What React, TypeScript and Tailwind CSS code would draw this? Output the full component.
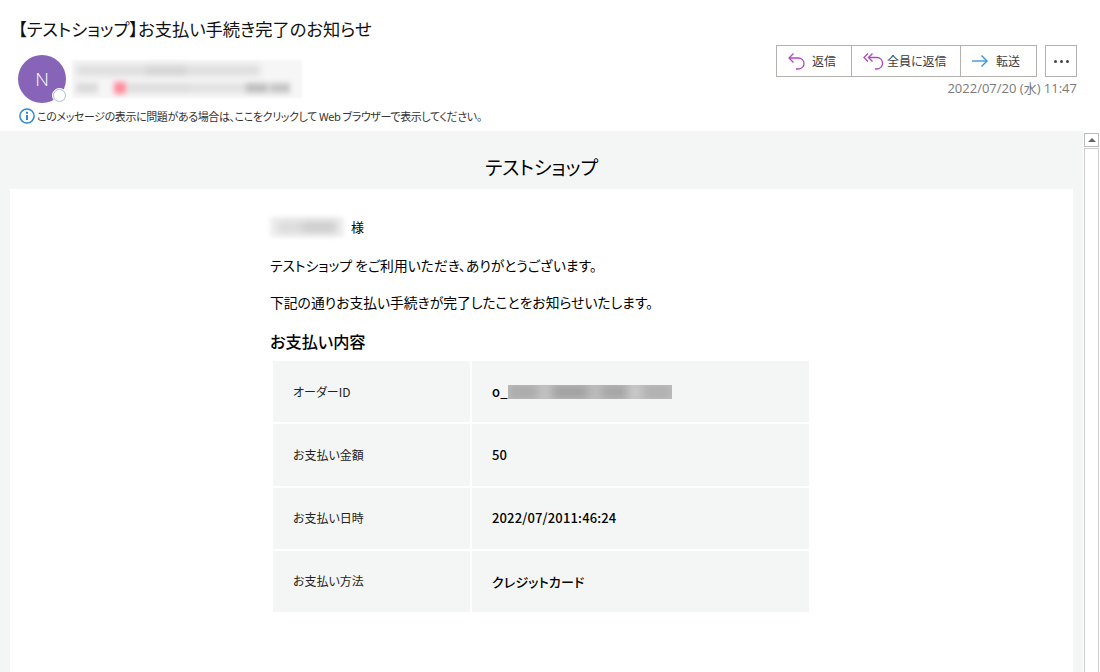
import React from 'react';

const rows = [
  { label: 'オーダーID', value: 'o_', blurred: true },
  { label: 'お支払い金額', value: '50' },
  { label: 'お支払い日時', value: '2022/07/20 11:46:24' },
  { label: 'お支払い方法', value: 'クレジットカード' },
];

const ReplyIcon = () => (
  <svg width="17" height="17" viewBox="0 0 17 17" fill="none" stroke="#b146c2" strokeWidth="1.3">
    <path d="M5.500 .5 1 5l4.500 4.500" />
    <path d="M1 5h9.500a5.500 5.500 0 0 1 5.500 5.500v0a5.500 5.500 0 0 1-5.500 5.500H8" />
  </svg>
);

const ReplyAllIcon = () => (
  <svg width="21" height="17" viewBox="0 0 21 17" fill="none" stroke="#b146c2" strokeWidth="1.3">
    <path d="M5 .5 1 4.500 5 8.500" />
    <path d="M9.500 .5 5.500 4.500l4 4" />
    <path d="M5.500 4.500h8.500a5.500 5.500 0 0 1 5.500 5.500v.500a5.500 5.500 0 0 1-5.500 5.500h-2" />
  </svg>
);

const ForwardIcon = () => (
  <svg width="16" height="14" viewBox="0 0 16 14" fill="none" stroke="#2b92d8" strokeWidth="1.3">
    <path d="M0 7h15" />
    <path d="M9.500 1.500 15 7l-5.500 5.500" />
  </svg>
);

const ActionButton = ({ icon, label, className }: { icon: React.ReactNode; label: string; className: string }) => (
  <button className={`flex items-center h-full text-[12px] text-[#3c3c3c] ${className}`}>
    {icon}
    <span>{label}</span>
  </button>
);

export default function App() {
  return (
    <div className="w-[1100px] h-[672px] overflow-hidden bg-white flex flex-col font-['Noto_Sans_CJK_JP',sans-serif] [font-feature-settings:'palt']">
      <header className="h-[131px] shrink-0 flex justify-between pl-[18px] pr-[23px]">
        <div>
          <h1 className="mt-[18px] h-[22px] leading-[22px] text-[17.300px] text-[#111]">【テストショップ】お支払い手続き完了のお知らせ</h1>
          <div className="mt-[15px] flex items-center">
            <div className="relative w-[48px] h-[48px] rounded-full bg-[#8764b8] flex items-center justify-center text-white text-[19px] font-light font-['Open_Sans',sans-serif]">
              N
              <span className="absolute right-[-1px] bottom-0 w-[15px] h-[15px] rounded-full bg-white border-[1px] border-white">
                <span className="block w-full h-full rounded-full border-[1.500px] border-[#a9c3d1]" />
              </span>
            </div>
            <div className="ml-[6px] w-[230px] h-[38px] flex flex-col justify-center gap-[6px] px-[4px] bg-[#f6f6f6] blur-[1px]">
              <div className="flex h-[11px] w-[184px] blur-[3px]">
                <span className="w-[70px] bg-[#dedede]" />
                <span className="w-[40px] bg-[#d4d4d4]" />
                <span className="w-[74px] bg-[#dedede]" />
              </div>
              <div className="flex items-center h-[12px] blur-[2.500px]">
                <span className="w-[22px] h-[10px] bg-[#dadada]" />
                <span className="ml-[16px] w-[12px] h-[12px] bg-[#ff8a9b]" />
                <span className="ml-[2px] w-[62px] h-[10px] bg-[#dedede]" />
                <span className="w-[56px] h-[10px] bg-[#e2e2e2]" />
                <span className="w-[22px] h-[10px] bg-[#c0c0c0]" />
                <span className="ml-[2px] w-[20px] h-[10px] bg-[#c6c6c6]" />
              </div>
            </div>
          </div>
          <div className="mt-[5px] flex items-center h-[16px] ml-[1px] text-[11px] tracking-[-0.380px] text-[#333]">
            <svg width="16" height="16" viewBox="0 0 16 16" className="mr-[2px] shrink-0">
              <circle cx="8" cy="8" r="7.100" fill="none" stroke="#2b88d8" strokeWidth="1.500" />
              <rect x="7" y="7" width="2" height="5" fill="#2b88d8" />
              <rect x="7" y="3.800" width="2" height="2" fill="#2b88d8" />
            </svg>
            <span className="whitespace-nowrap">このメッセージの表示に問題がある場合は、ここをクリックして Web ブラウザーで表示してください。</span>
          </div>
        </div>
        <div className="pt-[45px] flex flex-col items-end">
          <div className="flex h-[32px] gap-[8px]">
            <div className="flex h-full border border-[#b3b0ad] divide-x divide-[#b3b0ad]">
              <ActionButton icon={<ReplyIcon />} label="返信" className="w-[75px] pl-[11px] gap-[7px]" />
              <ActionButton icon={<ReplyAllIcon />} label="全員に返信" className="w-[109px] pl-[11px] gap-[3px]" />
              <ActionButton icon={<ForwardIcon />} label="転送" className="w-[75px] pl-[11px] gap-[8px]" />
            </div>
            <button className="w-[32px] h-full border border-[#b3b0ad] flex items-center justify-center gap-[3px]">
              <span className="w-[3px] h-[3px] rounded-full bg-[#444]" />
              <span className="w-[3px] h-[3px] rounded-full bg-[#444]" />
              <span className="w-[3px] h-[3px] rounded-full bg-[#444]" />
            </button>
          </div>
          <div className="mt-[2px] h-[18px] leading-[18px] text-[13px] text-[#7a7a7a] font-['Open_Sans','Noto_Sans_CJK_JP',sans-serif]">2022/07/20 (水) 11:47</div>
        </div>
      </header>

      <div className="flex-1 flex min-h-0">
        <main className="w-[1083px] bg-[#f4f6f5] flex flex-col px-[10px]">
          <div className="h-[58px] shrink-0 pt-[22px] text-center text-[19px] leading-[28px] text-black">テストショップ</div>
          <div className="flex-1 bg-white pl-[260px] text-[13.800px] text-black">
            <div className="h-[20px] mt-[28px] flex items-center">
              <div className="w-[74px] h-[20px] flex items-center justify-center bg-[#f0f0f0] blur-[2px]">
                <span className="w-[60px] h-[12px] flex blur-[3px]">
                  <span className="w-[26px] bg-[#dadada]" />
                  <span className="w-[34px] bg-[#cccccc]" />
                </span>
              </div>
              <span className="ml-[7px] text-[13px]">様</span>
            </div>
            <p className="mt-[17px] h-[22px] leading-[22px]">テストショップ をご利用いただき、ありがとうございます。</p>
            <p className="mt-[15px] h-[22px] leading-[22px]">下記の通りお支払い手続きが完了したことをお知らせいたします。</p>
            <h2 className="mt-[17px] h-[22px] leading-[22px] text-[16.200px] font-medium">お支払い内容</h2>
            <div className="mt-[9px] ml-[3px] w-[536px] flex flex-col gap-[2px]">
              {rows.map((row) => (
                <div key={row.label} className="flex h-[61.250px] gap-[2px]">
                  <div className="w-[197px] bg-[#f4f6f5] pl-[20px] flex items-center text-[12px] text-[#222]">{row.label}</div>
                  <div className="flex-1 bg-[#f4f6f5] pl-[20px] flex items-center text-[13px] tracking-[0.150px] font-medium text-black [word-spacing:-3px]">
                    {row.value}
                    {row.blurred && (
                      <span className="w-[164px] h-[14px] overflow-hidden bg-[#c0c0c0]">
                        <span className="flex h-full blur-[5px]">
                          <span className="w-[30px] bg-[#aaaaaa]" />
                          <span className="w-[14px] bg-[#c4c4c4]" />
                          <span className="w-[36px] bg-[#a0a0a0]" />
                          <span className="w-[14px] bg-[#bcbcbc]" />
                          <span className="w-[26px] bg-[#a4a4a4]" />
                          <span className="w-[14px] bg-[#cccccc]" />
                          <span className="w-[30px] bg-[#b0b0b0]" />
                        </span>
                      </span>
                    )}
                  </div>
                </div>
              ))}
            </div>
          </div>
        </main>
        <div className="flex-1 flex flex-col pt-[2px] pl-[1px] pr-[1px]">
          <div className="h-[14px] border border-[#bbb] flex items-center justify-center">
            <span className="w-0 h-0 border-x-[4px] border-x-transparent border-b-[4px] border-b-[#666]" />
          </div>
          <div className="flex-1 mt-[1px] border-x border-t border-[#ccc]" />
        </div>
      </div>
    </div>
  );
}
